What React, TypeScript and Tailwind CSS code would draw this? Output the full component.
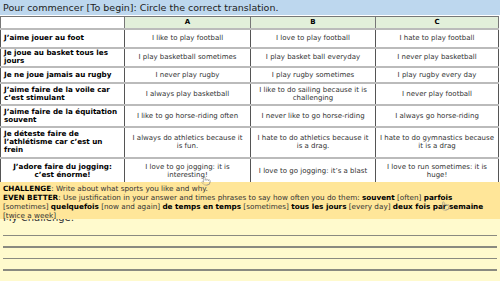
import React from "react";
import { Pointer } from "lucide-react";

const rows: { fr: string; a: string; b: string; c: string; h: string; center?: boolean }[] = [
  { fr: "J’aime jouer au foot", a: "I like to play football", b: "I love to play football", c: "I hate to play football", h: "h-[19px]" },
  { fr: "Je joue au basket tous les jours", a: "I play basketball sometimes", b: "I play basket ball everyday", c: "I never play basketball", h: "h-[19px]" },
  { fr: "Je ne joue jamais au rugby", a: "I never play rugby", b: "I play rugby sometimes", c: "I play rugby every day", h: "h-[16px]" },
  { fr: "J’aime faire de la voile car c’est stimulant", a: "I always play basketball", b: "I like to do sailing because it is challenging", c: "I never play football", h: "h-[22px]" },
  { fr: "J’aime faire de la équitation souvent", a: "I like to go horse-riding often", b: "I never like to go horse-riding", c: "I always go horse-riding", h: "h-[22px]" },
  { fr: "Je déteste faire de l’athlétisme car c’est un frein", a: "I always do athletics because it is fun.", b: "I hate to do athletics because it is a drag.", c: "I hate to do gymnastics because it is a drag", h: "h-[31px]" },
  { fr: "J’adore faire du jogging: c’est énorme!", a: "I love to go jogging: it is interesting!", b: "I love to go jogging: it’s a blast", c: "I love to run sometimes: it is huge!", h: "h-[27px]", center: true },
];

export default function App() {
  return (
    <div className="relative w-[500px] h-[281px] overflow-hidden bg-white text-black" style={{ fontFamily: '"DejaVu Sans", Verdana, sans-serif' }}>
      <div className="h-[15px] bg-[#bdd7ee] pl-[3px] text-[9.5px] leading-[15px] text-[#222]">
        Pour commencer [To begin]: Circle the correct translation.
      </div>
      <table className="mt-[1px] w-[498px] table-fixed border-collapse text-[7px] leading-[8px]">
        <colgroup>
          <col className="w-[124px]" />
          <col className="w-[126px]" />
          <col className="w-[125px]" />
          <col className="w-[123px]" />
        </colgroup>
        <thead>
          <tr className="h-[12px]">
            <th className="border border-[#777] bg-white"></th>
            <th className="border border-[#777] bg-[#e2efda] font-bold">A</th>
            <th className="border border-[#777] bg-[#e2efda] font-bold">B</th>
            <th className="border border-[#777] bg-[#e2efda] font-bold">C</th>
          </tr>
        </thead>
        <tbody>
          {rows.map((r, i) => (
            <tr key={i} className={r.h}>
              <td className={`border-x border-x-[#555] border-y-2 border-y-[#bbb] px-[3px] font-bold text-[7.2px] leading-[8px] ${r.center ? "text-center" : "text-left"}`}>{r.fr}</td>
              <td className="border-x border-x-[#555] border-y-2 border-y-[#bbb] px-[4px] text-center text-[#333]">{r.a}</td>
              <td className="border-x border-x-[#555] border-y-2 border-y-[#bbb] px-[4px] text-center text-[#333]">{r.b}</td>
              <td className="border-x border-x-[#555] border-y-2 border-y-[#bbb] px-[4px] text-center text-[#333]">{r.c}</td>
            </tr>
          ))}
        </tbody>
      </table>
      <div className="bg-[#fffacd] h-[120px] pt-[26px] px-[3px]">
        <div className="text-[10px] leading-[12px] text-[#333]">My Challenge:</div>
        <div className="mt-[11px] flex flex-col gap-[10px]">
          <div className="h-[1.5px] bg-[#8a8a80]" />
          <div className="h-[1.5px] bg-[#8a8a80]" />
          <div className="h-[1.5px] bg-[#8a8a80]" />
          <div className="h-[1.5px] bg-[#8a8a80]" />
        </div>
      </div>
      <div className="absolute left-0 top-[182px] w-[500px] h-[37px] bg-[#ffe699] px-[3px] pt-[2px] text-[7.25px] leading-[9px] text-[#333] whitespace-nowrap">
        <div><b className="text-black">CHALLENGE</b>: Write about what sports you like and why.</div>
        <div>
          <b className="text-black">EVEN BETTER</b>: Use justification in your answer and times phrases to say how often you do them: <b className="text-black">souvent</b> [often] <b className="text-black">parfois</b>
        </div>
        <div>
          [sometimes] <b className="text-black">quelquefois</b> [now and again] <b className="text-black">de temps en temps</b> [sometimes] <b className="text-black">tous les jours</b> [every day] <b className="text-black">deux fois par semaine</b>
        </div>
        <div>[twice a week]</div>
      </div>
      <Pointer className="absolute left-[201px] top-[176px] text-[#888]" size={10} strokeWidth={1.2} />
      <Pointer className="absolute left-[440px] top-[201px] text-[#888]" size={10} strokeWidth={1.2} />
    </div>
  );
}
